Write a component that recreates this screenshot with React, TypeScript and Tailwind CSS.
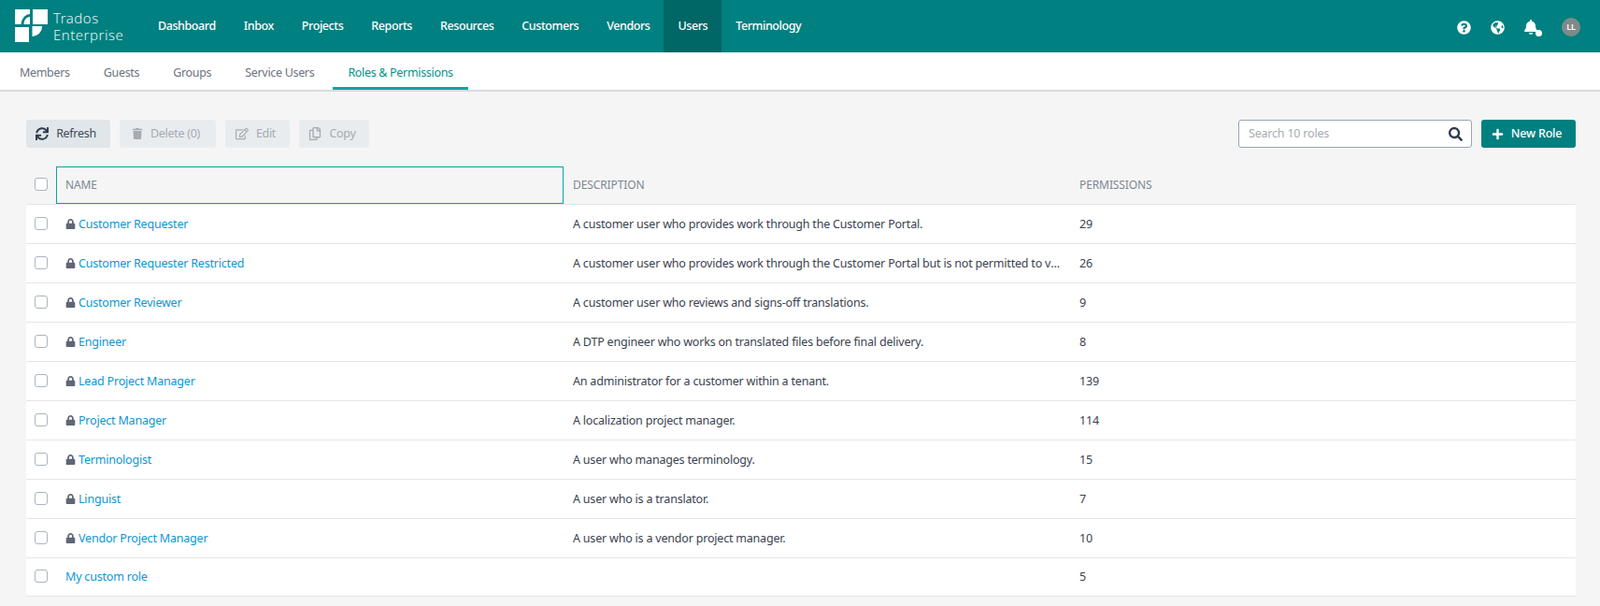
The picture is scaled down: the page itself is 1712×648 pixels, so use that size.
import React from "react";
import { FaSync, FaTrash, FaRegEdit, FaRegCopy, FaLock, FaSearch, FaPlus, FaQuestionCircle, FaGlobeAmericas, FaBell } from "react-icons/fa";

const nav = ["Dashboard", "Inbox", "Projects", "Reports", "Resources", "Customers", "Vendors", "Users", "Terminology"];
const tabs = ["Members", "Guests", "Groups", "Service Users", "Roles & Permissions"];
const rows: [string, string, string, boolean][] = [
  ["Customer Requester", "A customer user who provides work through the Customer Portal.", "29", true],
  ["Customer Requester Restricted", "A customer user who provides work through the Customer Portal but is not permitted to view financial information.", "26", true],
  ["Customer Reviewer", "A customer user who reviews and signs-off translations.", "9", true],
  ["Engineer", "A DTP engineer who works on translated files before final delivery.", "8", true],
  ["Lead Project Manager", "An administrator for a customer within a tenant.", "139", true],
  ["Project Manager", "A localization project manager.", "114", true],
  ["Terminologist", "A user who manages terminology.", "15", true],
  ["Linguist", "A user who is a translator.", "7", true],
  ["Vendor Project Manager", "A user who is a vendor project manager.", "10", true],
  ["My custom role", "", "5", false],
];

function Logo() {
  return (
    <svg width="36" height="36" viewBox="0 0 36 36" className="shrink-0">
      <path d="M0 0H16V5C11 5 7 10 6.500 16H0Z" fill="#fff" />
      <path d="M16 8C12 8 9.500 12 9.500 16H16Z" fill="#fff" />
      <path d="M19 0H35V16H19Z" fill="#fff" />
      <path d="M0 19H15V35H0Z" fill="#fff" />
      <path d="M18.500 18H29C29 24 25 28 18.500 29Z" fill="#fff" />
    </svg>
  );
}

function Box() {
  return <span className="block h-[14px] w-[14px] rounded-[3px] border-[1.5px] border-[#aab4c2] bg-white" />;
}

function ToolButton({ icon, label, disabled, className }: { icon: React.ReactNode; label: string; disabled?: boolean; className: string }) {
  return (
    <button className={`flex h-[30px] items-center justify-center gap-[8px] rounded-[3px] text-[12.500px] tracking-[-0.3px] ${disabled ? "bg-[#e9ecef] text-[#a5abb3]" : "bg-[#e1e6ea] text-[#3e4a5c]"} ${className}`}>
      {icon}
      <span>{label}</span>
    </button>
  );
}

export default function App() {
  return (
    <div className="h-[648px] overflow-hidden bg-[#f5f5f5] font-['Noto_Sans','Open_Sans',sans-serif] text-[12.500px] tracking-[-0.2px] text-[#3a4250]">
      <header className="flex h-[56px] items-center bg-[#008080] pl-4 pr-[21px] text-white">
        <Logo />
        <div className="ml-[5px] w-[82px] font-['Lato',sans-serif] text-[15px] font-light leading-[18px] tracking-[0.5px] text-[#e6f3f3]">
          <div>Trados</div>
          <div>Enterprise</div>
        </div>
        <nav className="ml-[15px] flex h-full">
          {nav.map((n) => (
            <a key={n} className={`flex h-full items-center px-[15px] text-[12.500px] font-medium tracking-[-0.42px] text-white ${n === "Users" ? "bg-[#006666]" : ""}`}>{n}</a>
          ))}
        </nav>
        <div className="ml-auto flex items-center pt-[2px]">
          <FaQuestionCircle className="text-[15px]" />
          <FaGlobeAmericas className="ml-[21px] text-[15px]" />
          <span className="relative ml-[20px] block">
            <FaBell className="text-[16px]" />
            <span className="absolute -bottom-[2px] -right-[4px] h-[7px] w-[7px] rounded-full bg-white" />
          </span>
          <span className="ml-[25px] flex h-5 w-5 items-center justify-center rounded-full bg-[#808a8a] text-[9px] font-semibold">LL</span>
        </div>
      </header>
      <div className="flex h-[42px] gap-[4px] border-b-2 border-[#d9dadf] bg-white pl-[5px]">
        {tabs.map((t, i) => (
          <a key={t} className={`flex h-[40px] items-center px-[16px] text-[12.500px] tracking-[-0.32px] ${i === 4 ? "border-b-[3px] border-[#00a89f] pt-[7px] text-[#00938c]" : "pt-[4px] text-[#6b7280]"}`}>{t}</a>
        ))}
      </div>
      <main className="pl-[28px] pr-[26px] pt-[30px]">
        <div className="flex items-start">
          <ToolButton className="w-[90px] pr-[5px]" icon={<FaSync className="text-[14px] text-[#2f3b4d]" />} label="Refresh" />
          <ToolButton disabled className="ml-[10px] w-[103px] pr-[4px]" icon={<FaTrash className="text-[12px]" />} label="Delete (0)" />
          <ToolButton disabled className="ml-[10px] w-[69px] pr-[4px]" icon={<FaRegEdit className="text-[14px]" />} label="Edit" />
          <ToolButton disabled className="ml-[10px] w-[75px] pr-[4px]" icon={<FaRegCopy className="text-[14px]" />} label="Copy" />
          <div className="ml-auto flex h-[30px] w-[250px] items-center rounded-[3px] border border-[#98a4b3] bg-white pl-[10px] pr-[9px]">
            <span className="text-[#a5abb3]">Search 10 roles</span>
            <FaSearch className="ml-auto text-[15px] text-[#2f3b4d]" />
          </div>
          <button className="ml-[10px] flex h-[30px] w-[101px] items-center justify-center gap-[8px] rounded-[3px] bg-[#008080] pr-[4px] font-medium text-white">
            <FaPlus className="text-[13px]" />
            New Role
          </button>
        </div>
        <div className="mt-[20px]">
          <div className="flex h-[41px] border-b border-[#e3e6ea] text-[12px] tracking-[-0.1px] text-[#7c8794]">
            <div className="flex w-[32px] items-center pb-[2px] pl-[9px]"><Box /></div>
            <div className="flex h-[40px] w-[543px] items-center border border-[#00a89f] pb-[1px] pl-[9px]">NAME</div>
            <div className="flex w-[542px] items-center pb-[1px] pl-[10px]">DESCRIPTION</div>
            <div className="flex items-center pb-[1px] pl-[10px]">PERMISSIONS</div>
          </div>
          {rows.map(([name, desc, perm, locked], i) => (
            <div key={name} className={`flex items-center border-b border-[#e3e6ea] bg-white ${i === 9 ? "h-[41px]" : "h-[42px] pt-[1px]"}`}>
              <div className="w-[32px] pb-[3px] pl-[9px]"><Box /></div>
              <div className="flex w-[543px] items-center gap-[3px] pl-[10px] text-[#0c96d6]">
                {locked && <FaLock className="-mt-[2px] text-[11px] text-[#5f6676]" />}
                <span>{name}</span>
              </div>
              <div className="w-[542px] px-[10px]"><div className="truncate">{desc}</div></div>
              <div className="pl-[10px]">{perm}</div>
            </div>
          ))}
        </div>
      </main>
    </div>
  );
}
